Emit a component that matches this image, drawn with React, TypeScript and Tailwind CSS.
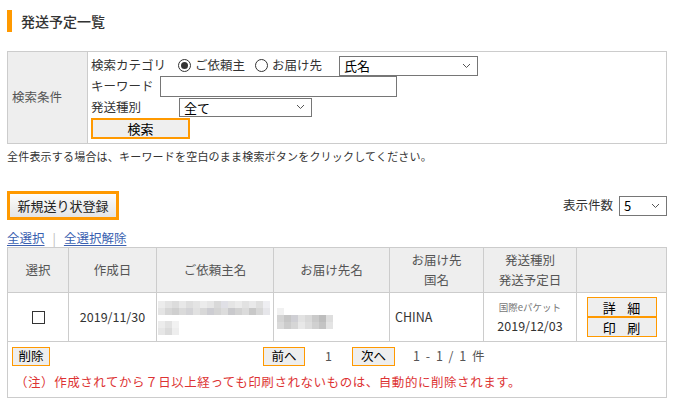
import React from 'react'

const font = { fontFamily: '"Noto Sans CJK JP", "Noto Sans", sans-serif' }

function Chevron() {
  return (
    <svg width="9" height="6" viewBox="0 0 9 6" className="shrink-0">
      <path d="M1 1 L4.5 4.5 L8 1" fill="none" stroke="#555" strokeWidth="1" />
    </svg>
  )
}

function FakeSelect({ label, className }: { label: string; className: string }) {
  return (
    <div
      className={`flex items-center justify-between border border-[#767676] bg-white pl-[4px] pr-[6px] text-[13px] leading-none text-black ${className}`}
    >
      <span>{label}</span>
      <Chevron />
    </div>
  )
}

function Radio({ checked }: { checked?: boolean }) {
  return (
    <span className="flex h-[13px] w-[13px] items-center justify-center rounded-full border border-[#333] bg-white">
      {checked ? <span className="h-[7px] w-[7px] rounded-full bg-[#333]" /> : null}
    </span>
  )
}

const mosaicA = [
  ['#ececec', '#e3e3e3', '#dcdcdc', '#e8e8e8', '#dedede', '#e4e4e4', '#ececec', '#e6e6e6', '#d9d9d9', '#e0e0e6', '#e5e5e5', '#ebebeb', '#e2e2e2', '#e9e9ea', '#dfdfdf', '#eeeef2'],
  ['#e4e4e4', '#d6d6d6', '#cfcfcf', '#dadada', '#d3d3d6', '#e1e1e1', '#d8d8d8', '#cdcdd2', '#d4d4d4', '#dcdcdc', '#c9c9cc', '#d2d2d2', '#dbdbdb', '#c8c8c8', '#d7d7d7', '#e6e6ea'],
]
const mosaicB = [
  ['#ececec', '#e2e2e2', '#f2f2f2'],
  ['#e6e6e6', '#dbdbdb', '#eeeeee'],
]
const mosaicC = [
  ['#f1f1f1', '#ffffff', '#ffffff', '#ffffff', '#ffffff', '#ffffff', '#ffffff', '#ffffff'],
  ['#d4d4d4', '#c6c6c6', '#cfcfd4', '#e2e2e2', '#d9d9d9', '#cacaca', '#bdbdbd', '#dedede'],
  ['#dadada', '#cccccc', '#d6d6d6', '#e8e8e8', '#dddddd', '#d0d0d0', '#c4c4c4', '#e4e4e4'],
]

function Mosaic({ rows, cell }: { rows: string[][]; cell: number }) {
  return (
    <div className="flex flex-col">
      {rows.map((row, i) => (
        <div key={i} className="flex">
          {row.map((c, j) => (
            <span key={j} style={{ width: cell, height: cell, background: c }} />
          ))}
        </div>
      ))}
    </div>
  )
}

export default function App() {
  return (
    <div className="h-[416px] w-[680px] bg-white pl-[7px] pt-[10px] text-[#333]" style={font}>
      {/* title */}
      <div className="flex h-[22px] items-center gap-[9px]">
        <span className="h-[22px] w-[5px] bg-[#f90]" />
        <h1 className="text-[14px] font-medium leading-none text-[#333]">発送予定一覧</h1>
      </div>

      {/* search conditions */}
      <table className="mt-[19px] w-[660px] table-fixed border-collapse text-[12.5px]">
        <colgroup>
          <col className="w-[80px]" />
          <col />
        </colgroup>
        <tbody>
          <tr>
            <td className="border border-[#ccc] bg-[#eee] pl-[4px] align-middle text-[#555]">検索条件</td>
            <td className="border border-[#ccc] px-[3px] pb-[4px] pt-[3px] align-top">
              <div className="flex h-[21px] items-center">
                <span className="w-[87px]">検索カテゴリ</span>
                <Radio checked />
                <span className="ml-[4px] w-[60px]">ご依頼主</span>
                <Radio />
                <span className="ml-[4px] w-[67px]">お届け先</span>
                <FakeSelect label="氏名" className="h-[20px] w-[139px]" />
              </div>
              <div className="flex h-[21px] items-center">
                <span className="w-[69px]">キーワード</span>
                <input className="h-[21px] w-[237px] border border-[#767676] bg-white outline-none" />
              </div>
              <div className="flex h-[20px] items-center">
                <span className="w-[88px]">発送種別</span>
                <FakeSelect label="全て" className="h-[19px] w-[133px]" />
              </div>
              <button className="mt-[1px] flex h-[21px] w-[99px] items-center justify-center border-2 border-[#f90] bg-[#efefef] text-[13px] leading-none text-black">
                検索
              </button>
            </td>
          </tr>
        </tbody>
      </table>
      <p className="mt-[4px] text-[11px] leading-[16px] tracking-[0.2px] text-[#333]">
        全件表示する場合は、キーワードを空白のまま検索ボタンをクリックしてください。
      </p>

      {/* actions */}
      <div className="mt-[27px] flex w-[660px] items-center justify-between">
        <button className="flex h-[29px] w-[112px] items-center justify-center border-[3px] border-[#f90] bg-gradient-to-b from-[#fdfdfd] to-[#e4e4e4] text-[13px] leading-none text-[#222]">
          新規送り状登録
        </button>
        <div className="flex items-center gap-[6px]">
          <span className="text-[12.5px]">表示件数</span>
          <FakeSelect label="5" className="h-[20px] w-[48px]" />
        </div>
      </div>

      <div className="mt-[10px] flex h-[17px] items-center text-[12.5px] leading-none">
        <a className="text-[#3a5fb0] underline underline-offset-2">全選択</a>
        <span className="mx-[8px] text-[#bbb]">|</span>
        <a className="text-[#3a5fb0] underline underline-offset-2">全選択解除</a>
      </div>

      {/* list */}
      <table className="w-[660px] table-fixed border-collapse text-[12.5px]">
        <colgroup>
          <col className="w-[61px]" />
          <col className="w-[88px]" />
          <col className="w-[117px]" />
          <col className="w-[116px]" />
          <col className="w-[94px]" />
          <col className="w-[93px]" />
          <col />
        </colgroup>
        <thead>
          <tr className="h-[45px] bg-[#eee] text-[#555]">
            <th className="border border-[#ccc] font-normal">選択</th>
            <th className="border border-[#ccc] font-normal">作成日</th>
            <th className="border border-[#ccc] font-normal">ご依頼主名</th>
            <th className="border border-[#ccc] font-normal">お届け先名</th>
            <th className="border border-[#ccc] font-normal leading-[20px]">
              お届け先
              <br />
              国名
            </th>
            <th className="border border-[#ccc] font-normal leading-[20px]">
              発送種別
              <br />
              発送予定日
            </th>
            <th className="border border-[#ccc] font-normal" />
          </tr>
        </thead>
        <tbody>
          <tr className="h-[49px]">
            <td className="border border-[#ccc] text-center align-middle">
              <span className="inline-block h-[13px] w-[13px] translate-y-[2px] border border-[#333] bg-white" />
            </td>
            <td className="border border-[#ccc] text-center">2019/11/30</td>
            <td className="border border-[#ccc] p-0 pl-[1px] align-top">
              <div className="pt-[8px]">
                <Mosaic rows={mosaicA} cell={7} />
                <div className="mt-[6px]">
                  <Mosaic rows={mosaicB} cell={7} />
                </div>
              </div>
            </td>
            <td className="border border-[#ccc] p-0 pl-[3px] align-top">
              <div className="pt-[15px]">
                <Mosaic rows={mosaicC} cell={7} />
              </div>
            </td>
            <td className="border border-[#ccc] pl-[5px]">CHINA</td>
            <td className="border border-[#ccc] text-center">
              <div className="text-[9.5px] leading-[14px] text-[#777]">国際eパケット</div>
              <div className="mt-[4px] leading-[16px]">2019/12/03</div>
            </td>
            <td className="border border-[#ccc] p-0">
              <div className="flex flex-col items-center">
                <button className="flex h-[20px] w-[70px] items-center justify-center border border-[#f90] bg-[#eee] text-[13px] leading-none tracking-[0.9em] text-black">
                  <span className="pl-[0.9em]">詳細</span>
                </button>
                <button className="flex h-[20px] w-[70px] items-center justify-center border border-[#f90] bg-[#eee] text-[13px] leading-none tracking-[0.9em] text-black">
                  <span className="pl-[0.9em]">印刷</span>
                </button>
              </div>
            </td>
          </tr>
        </tbody>
      </table>

      {/* footer */}
      <div className="h-[56px] w-[660px] border border-t-0 border-[#ccc] pl-[4px] pt-[5px] text-[12.5px]">
        <div className="flex h-[19px] items-center">
          <button className="flex h-[19px] w-[38px] items-center justify-center border border-[#f90] bg-[#eee] text-[12.5px] leading-none text-black">
            削除
          </button>
          <span className="w-[213px]" />
          <button className="flex h-[19px] w-[42px] items-center justify-center border border-[#f90] bg-[#eee] text-[12.5px] leading-none text-black">
            前へ
          </button>
          <span className="w-[47px] text-center text-[#555]">1</span>
          <button className="flex h-[19px] w-[43px] items-center justify-center border border-[#f90] bg-[#eee] text-[12.5px] leading-none text-black">
            次へ
          </button>
          <span className="ml-[18px] text-[#555] [word-spacing:3px]">1 - 1 / 1 件</span>
        </div>
        <p className="mt-[8px] pl-[3px] text-[12.5px] leading-[16px] tracking-[0.55px] text-[#d33]">
          （注）作成されてから７日以上経っても印刷されないものは、自動的に削除されます。
        </p>
      </div>
    </div>
  )
}
